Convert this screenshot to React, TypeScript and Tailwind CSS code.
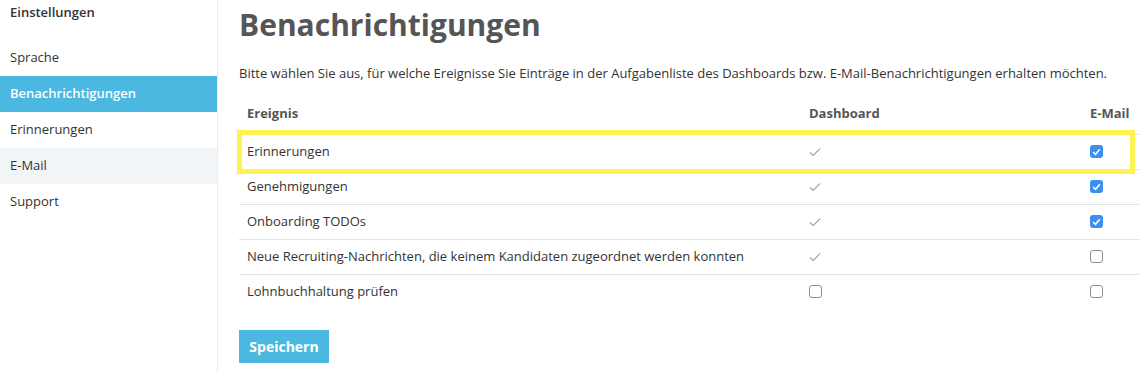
import React from "react";

type Row = {
  label: string;
  dashboard: "check" | boolean;
  email: boolean;
};

const rows: Row[] = [
  { label: "Erinnerungen", dashboard: "check", email: true },
  { label: "Genehmigungen", dashboard: "check", email: true },
  { label: "Onboarding TODOs", dashboard: "check", email: true },
  {
    label: "Neue Recruiting-Nachrichten, die keinem Kandidaten zugeordnet werden konnten",
    dashboard: "check",
    email: false,
  },
  { label: "Lohnbuchhaltung prüfen", dashboard: false, email: false },
];

const navItems = ["Sprache", "Benachrichtigungen", "Erinnerungen", "E-Mail", "Support"];

function Tick() {
  return (
    <svg width="12" height="10" viewBox="0 0 12 10" className="block">
      <path d="M1 5.5 L4.2 8.5 L11 1.5" fill="none" stroke="#6b6b6b" strokeWidth="1" />
    </svg>
  );
}

function Checkbox({ checked }: { checked: boolean }) {
  if (checked) {
    return (
      <span className="flex h-[13px] w-[13px] items-center justify-center rounded-[3px] bg-[#3b8ff0]">
        <svg width="9" height="8" viewBox="0 0 9 8">
          <path d="M1.2 4.2 L3.5 6.3 L7.8 1.3" fill="none" stroke="#fff" strokeWidth="1.6" />
        </svg>
      </span>
    );
  }
  return <span className="block h-[13px] w-[13px] rounded-[3px] border border-[#8f8f8f] bg-white" />;
}

export default function App() {
  return (
    <div className="flex h-[373px] w-[1139px] overflow-hidden bg-white font-['Open_Sans',sans-serif] text-[13px] text-[#333]">
      {/* SIDEBAR */}
      <aside className="w-[218px] shrink-0 border-r border-[#ececec]">
        <div className="h-[40px] px-[10px] pt-[3px] text-[13px] font-semibold text-[#333]">Einstellungen</div>
        {navItems.map((item) => (
          <div
            key={item}
            className={
              item === "Benachrichtigungen"
                ? "flex h-[36px] items-center bg-[#4ab8e0] px-[10px] font-semibold text-white"
                : item === "E-Mail"
                ? "flex h-[36px] items-center bg-[#f2f5f8] px-[10px]"
                : "flex h-[36px] items-center px-[10px]"
            }
          >
            {item}
          </div>
        ))}
      </aside>

      {/* MAIN */}
      <main className="flex-1 pl-[21px]">
        <h1 className="mt-[3px] text-[30px] font-bold leading-[44px] text-[#555]">Benachrichtigungen</h1>
        <p className="mt-[17px] leading-[18px]">
          Bitte wählen Sie aus, für welche Ereignisse Sie Einträge in der Aufgabenliste des Dashboards bzw.
          E-Mail-Benachrichtigungen erhalten möchten.
        </p>

        <div className="relative mt-[11px] w-[900px]">
          <table className="w-full border-collapse">
            <thead>
              <tr className="h-[41px] text-left text-[#555]">
                <th className="w-[562px] pl-[8px] font-bold">Ereignis</th>
                <th className="w-[281px] pl-[8px] font-bold">Dashboard</th>
                <th className="pl-[8px] font-bold">E-Mail</th>
              </tr>
            </thead>
            <tbody>
              {rows.map((r) => (
                <tr key={r.label} className="h-[35px] border-t border-[#e3e3e3]">
                  <td className="pl-[8px]">{r.label}</td>
                  <td className="pl-[8px]">
                    {r.dashboard === "check" ? <Tick /> : <Checkbox checked={r.dashboard} />}
                  </td>
                  <td className="pl-[8px]">
                    <Checkbox checked={r.email} />
                  </td>
                </tr>
              ))}
            </tbody>
          </table>
          {/* highlight marker */}
          <div className="pointer-events-none absolute left-[-2px] top-[37px] h-[44px] w-[898px] border-[5px] border-[#fdf352]" />
        </div>

        <button className="mt-[21px] h-[33px] w-[90px] bg-[#4ab8e0] text-[14px] font-bold text-white">
          Speichern
        </button>
      </main>
    </div>
  );
}
